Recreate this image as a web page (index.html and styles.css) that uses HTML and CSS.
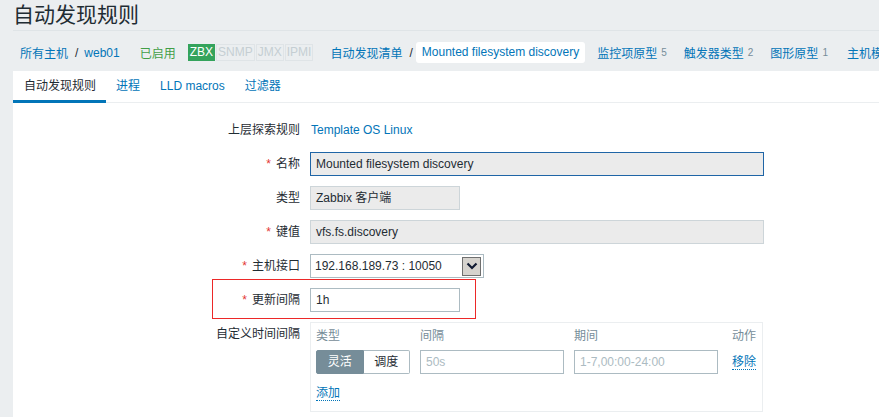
FILE: index.html
```html
<!DOCTYPE html>
<html lang="zh-CN">
<head>
  <meta charset="UTF-8">
  <title>自动发现规则</title>
  <link rel="stylesheet" href="styles.css">
</head>
<body>

  <div class="page">
    <div class="header">
      <h1>自动发现规则</h1>
    </div>

    <nav class="host-nav">
      <a href="#" class="crumb">所有主机</a>
      <span class="sep">/</span>
      <a href="#" class="crumb">web01</a>
      <span class="status-on">已启用</span>
      <span class="avail">
        <span class="tag tag-on">ZBX</span><span class="tag">SNMP</span><span class="tag">JMX</span><span class="tag">IPMI</span>
      </span>
      <a href="#" class="crumb crumb-list">自动发现清单</a>
      <span class="sep">/</span>
      <span class="crumb-current">Mounted filesystem discovery</span>
      <a href="#" class="nav-link first">监控项原型</a><sup class="count">5</sup>
      <a href="#" class="nav-link">触发器类型</a><sup class="count">2</sup>
      <a href="#" class="nav-link">图形原型</a><sup class="count">1</sup>
      <a href="#" class="nav-link last">主机模型</a>
    </nav>

    <div class="tab-box">
      <ul class="tabs">
        <li class="tab active">自动发现规则</li>
        <li class="tab"><a href="#">进程</a></li>
        <li class="tab"><a href="#">LLD macros</a></li>
        <li class="tab"><a href="#">过滤器</a></li>
      </ul>

      <form class="form-grid">
        <label class="form-label">上层探索规则</label>
        <div class="form-field"><a href="#" class="link">Template OS Linux</a></div>

        <label class="form-label"><span class="req">*</span>名称</label>
        <div class="form-field"><div class="input wide readonly focus">Mounted filesystem discovery</div></div>

        <label class="form-label">类型</label>
        <div class="form-field"><div class="input short readonly">Zabbix 客户端</div></div>

        <label class="form-label"><span class="req">*</span>键值</label>
        <div class="form-field"><div class="input wide readonly">vfs.fs.discovery</div></div>

        <label class="form-label"><span class="req">*</span>主机接口</label>
        <div class="form-field">
          <div class="select">
            <span>192.168.189.73 : 10050</span>
            <span class="select-btn">
              <svg width="12" height="8" viewBox="0 0 12 8"><path d="M1.5 1.5 L6 6 L10.5 1.5" fill="none" stroke="#111a33" stroke-width="2.2"/></svg>
            </span>
          </div>
        </div>

        <label class="form-label mark-row"><span class="req">*</span>更新间隔<span class="mark"></span></label>
        <div class="form-field"><div class="input short">1h</div></div>

        <label class="form-label label-top">自定义时间间隔</label>
        <div class="form-field">
          <div class="interval-box">
            <div class="interval-grid">
              <span class="col-head">类型</span>
              <span class="col-head">间隔</span>
              <span class="col-head">期间</span>
              <span class="col-head right">动作</span>

              <div class="radio-group">
                <span class="radio on">灵活</span><span class="radio">调度</span>
              </div>
              <div class="input placeholder">50s</div>
              <div class="input placeholder">1-7,00:00-24:00</div>
              <a href="#" class="link-dotted right">移除</a>
            </div>
            <a href="#" class="link-dotted add">添加</a>
          </div>
        </div>
      </form>
    </div>
  </div>

</body>
</html>
```

FILE: styles.css
```css
* {
  box-sizing: border-box;
  margin: 0;
  padding: 0;
}

body {
  background-color: #ebeef0;
  color: #1f2c33;
  font-family: "Liberation Sans", Arial, "Noto Sans CJK SC", sans-serif;
  font-size: 12px;
  overflow: hidden;
}

a {
  color: #0275b8;
  text-decoration: none;
}

.page {
  padding-left: 13px;
  width: 1000px;
}

/* Header */
.header {
  border-bottom: 1px solid #dfe4e7;
}

.header h1 {
  font-size: 21px;
  font-weight: normal;
  line-height: 30px;
  height: 30px;
}

/* Host navigation */
.host-nav {
  display: flex;
  align-items: center;
  height: 40px;
  padding: 3px 0 0 7px;
  white-space: nowrap;
}

.sep {
  margin: 0 6px 0 7px;
}

.status-on {
  color: #429e47;
  margin-left: 20px;
}

.avail {
  display: flex;
  margin-left: 12px;
}

.tag {
  display: inline-block;
  height: 17px;
  line-height: 15px;
  padding: 0 1px;
  border: 1px solid #dfe4e7;
  color: #c5ced3;
  margin-right: 1px;
  font-size: 12px;
}

.tag-on {
  background-color: #34a35c;
  border-color: #34a35c;
  color: #fff;
}

.crumb-list {
  margin-left: 16px;
}

.crumb-current {
  background: #fff;
  color: #0275b8;
  border-radius: 3px;
  padding: 0 6px;
  line-height: 21px;
  margin-left: -3px;
}

.nav-link {
  margin-left: 17px;
}

.nav-link.first {
  margin-left: 12px;
}

.nav-link.last {
  margin-left: 19px;
}

.count {
  color: #768d99;
  font-size: 10px;
  margin-left: 4px;
  vertical-align: baseline;
}

/* Tabs */
.tab-box {
  background: #fff;
  padding-bottom: 20px;
}

.tabs {
  display: flex;
  list-style: none;
  border-bottom: 1px solid #ebeef0;
  height: 32px;
}

.tab {
  padding: 0 10px;
  line-height: 30px;
  height: 32px;
  white-space: nowrap;
}

.tab.active {
  border-bottom: 3px solid #0275b8;
  padding-left: 11px;
}

/* Form */
.form-grid {
  display: grid;
  grid-template-columns: 287px 1fr;
  column-gap: 10px;
  row-gap: 10px;
  padding-top: 15px;
}

.form-label {
  text-align: right;
  line-height: 24px;
  height: 24px;
}

.req {
  color: #e33734;
  margin-right: 5px;
}

.form-field {
  display: flex;
  align-items: center;
  min-height: 24px;
}

.link {
  margin-left: 1px;
}

.input {
  height: 24px;
  line-height: 22px;
  border: 1px solid #acbbc2;
  padding: 0 5px;
  background: #fff;
  white-space: nowrap;
}

.input.wide {
  width: 454px;
}

.input.short {
  width: 150px;
}

.input.readonly {
  background: #ebebeb;
  border-color: #cdd5d9;
}

.input.focus {
  border-color: #1f65a6;
}

.input.placeholder {
  color: #acbbc2;
}

.select {
  display: flex;
  align-items: center;
  justify-content: space-between;
  width: 174px;
  height: 24px;
  border: 1px solid #acbbc2;
  padding: 0 2px 0 4px;
}

.select-btn {
  display: flex;
  align-items: center;
  justify-content: center;
  width: 19px;
  height: 19px;
  background: #d6d3ce;
  border: 1px solid #6f6f6f;
}

/* Red annotation box */
.mark-row {
  position: relative;
}

.mark {
  position: absolute;
  left: 199px;
  top: -9px;
  width: 264px;
  height: 40px;
  border: 1px solid #ec2828;
}

/* Custom intervals */
.interval-box {
  width: 453px;
  border: 1px solid #ebeef0;
  padding: 5px 6px 10px 5px;
}

.interval-grid {
  display: grid;
  grid-template-columns: 94px 144px 144px 1fr;
  column-gap: 10px;
  row-gap: 6px;
  align-items: center;
}

.interval-grid .input {
  width: 144px;
}

.col-head {
  color: #768d99;
  line-height: 16px;
}

.right {
  justify-self: end;
}

.radio-group {
  display: flex;
  height: 24px;
}

.radio {
  flex: 1;
  text-align: center;
  line-height: 22px;
  border: 1px solid #acbbc2;
  border-left: none;
  border-radius: 0 2px 2px 0;
}

.radio.on {
  background: #768d99;
  border-color: #768d99;
  color: #fff;
  border-radius: 2px 0 0 2px;
  border-left: 1px solid #768d99;
}

.link-dotted {
  border-bottom: 1px dotted #0275b8;
  line-height: 14px;
}

.add {
  display: inline-block;
  margin-top: 12px;
}
```
